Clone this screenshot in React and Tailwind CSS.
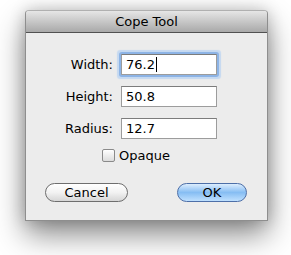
import React from "react";

const font = { fontFamily: '"DejaVu Sans", "Liberation Sans", sans-serif' };

function Field({ label, value, focused }) {
  return (
    <div className="flex items-center h-[21px]">
      <span className="w-[88px] text-right text-[13px] text-black leading-none">{label}</span>
      <div
        className={`ml-[8px] w-[96px] h-[21px] bg-white border border-[#9c9c9c] border-t-[#7c7c7c] flex items-center pl-[4px] text-[13px] text-black leading-none ${
          focused ? "rounded-[1px] shadow-[0_0_0_2px_#8db4e6,0_0_1px_4px_#c5d9f1]" : ""
        }`}
      >
        <span>{value}</span>
        {focused && <span className="ml-[1px] w-px h-[15px] bg-black" />}
      </div>
    </div>
  );
}

export default function App() {
  return (
    <div className="w-[291px] h-[255px] bg-white pt-[10px] pl-[25px]" style={font}>
      <div className="w-[243px] h-[211px] flex flex-col rounded-t-[4px] border border-[#8e8e8e] border-t-[#b0b0b0] bg-[#ececec] shadow-[0_14px_30px_rgba(0,0,0,0.45),0_0_16px_rgba(0,0,0,0.2)]">
        {/* Title bar */}
        <div className="h-[22px] shrink-0 rounded-t-[3px] bg-gradient-to-b from-[#e6e6e6] to-[#a9a9a9] border-b border-[#515151] flex items-center justify-center text-[13px] text-black">
          Cope Tool
        </div>

        {/* Body */}
        <div className="flex flex-col pt-[21px]">
          <div className="flex flex-col gap-[11px] -ml-px">
            <Field label="Width:" value="76.2" focused />
            <Field label="Height:" value="50.8" />
            <Field label="Radius:" value="12.7" />
          </div>

          <div className="flex items-center mt-[9px] ml-[76px] h-[14px]">
            <span className="w-[13px] h-[13px] rounded-[2px] border border-[#8a8a8a] bg-gradient-to-b from-white to-[#dcdcdc]" />
            <span className="ml-[4px] text-[13px] text-black leading-none">Opaque</span>
          </div>

          <div className="flex mt-[21px] ml-[19px] h-[19px]">
            <button className="w-[83px] h-[19px] rounded-full border border-[#6e6e6e] bg-gradient-to-b from-white via-[#f2f2f2] to-[#d6d6d6] text-[13px] text-black leading-none">
              Cancel
            </button>
            <button className="ml-[49px] w-[70px] h-[19px] rounded-full border border-[#4d6fa8] bg-gradient-to-b from-[#dcedfd] via-[#86bdf3] to-[#bfe0fe] text-[13px] text-black leading-none">
              OK
            </button>
          </div>
        </div>
      </div>
    </div>
  );
}
